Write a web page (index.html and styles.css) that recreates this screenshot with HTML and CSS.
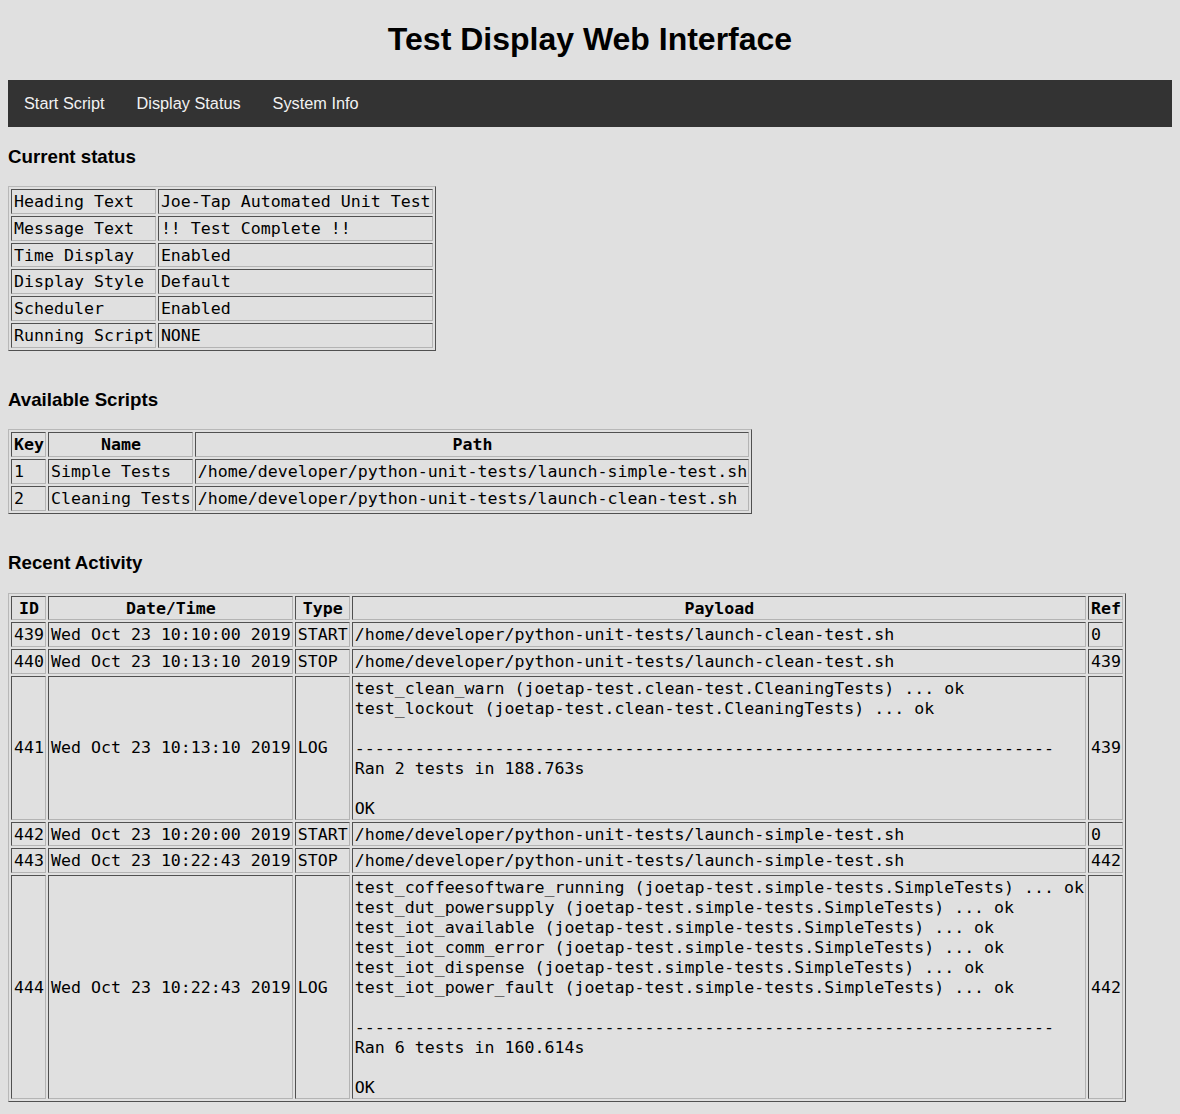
FILE: index.html
```html
<!DOCTYPE html>
<html lang="en">
<head>
<meta charset="utf-8">
<title>Test Display Web Interface</title>
<link rel="stylesheet" href="styles.css">
</head>
<body>
<h1 class="title">Test Display Web Interface</h1>
<nav class="topnav">
  <a href="#">Start Script</a>
  <a href="#">Display Status</a>
  <a href="#">System Info</a>
</nav>

<section class="section">
  <h3 class="heading">Current status</h3>
  <table class="grid">
    <tr><td>Heading Text</td><td>Joe-Tap Automated Unit Test</td></tr>
    <tr><td>Message Text</td><td>!! Test Complete !!</td></tr>
    <tr><td>Time Display</td><td>Enabled</td></tr>
    <tr><td>Display Style</td><td>Default</td></tr>
    <tr><td>Scheduler</td><td>Enabled</td></tr>
    <tr><td>Running Script</td><td>NONE</td></tr>
  </table>
</section>

<section class="section">
  <h3 class="heading">Available Scripts</h3>
  <table class="grid">
    <tr><th>Key</th><th>Name</th><th>Path</th></tr>
    <tr><td>1</td><td>Simple Tests</td><td>/home/developer/python-unit-tests/launch-simple-test.sh</td></tr>
    <tr><td>2</td><td>Cleaning Tests</td><td>/home/developer/python-unit-tests/launch-clean-test.sh</td></tr>
  </table>
</section>

<section class="section last">
  <h3 class="heading">Recent Activity</h3>
  <table class="grid">
    <tr><th>ID</th><th>Date/Time</th><th>Type</th><th>Payload</th><th>Ref</th></tr>
    <tr><td>439</td><td>Wed Oct 23 10:10:00 2019</td><td>START</td><td>/home/developer/python-unit-tests/launch-clean-test.sh</td><td>0</td></tr>
    <tr><td>440</td><td>Wed Oct 23 10:13:10 2019</td><td>STOP</td><td>/home/developer/python-unit-tests/launch-clean-test.sh</td><td>439</td></tr>
    <tr><td>441</td><td>Wed Oct 23 10:13:10 2019</td><td>LOG</td><td><pre class="log">test_clean_warn (joetap-test.clean-test.CleaningTests) ... ok
test_lockout (joetap-test.clean-test.CleaningTests) ... ok

----------------------------------------------------------------------
Ran 2 tests in 188.763s

OK</pre></td><td>439</td></tr>
    <tr><td>442</td><td>Wed Oct 23 10:20:00 2019</td><td>START</td><td>/home/developer/python-unit-tests/launch-simple-test.sh</td><td>0</td></tr>
    <tr><td>443</td><td>Wed Oct 23 10:22:43 2019</td><td>STOP</td><td>/home/developer/python-unit-tests/launch-simple-test.sh</td><td>442</td></tr>
    <tr><td>444</td><td>Wed Oct 23 10:22:43 2019</td><td>LOG</td><td><pre class="log">test_coffeesoftware_running (joetap-test.simple-tests.SimpleTests) ... ok
test_dut_powersupply (joetap-test.simple-tests.SimpleTests) ... ok
test_iot_available (joetap-test.simple-tests.SimpleTests) ... ok
test_iot_comm_error (joetap-test.simple-tests.SimpleTests) ... ok
test_iot_dispense (joetap-test.simple-tests.SimpleTests) ... ok
test_iot_power_fault (joetap-test.simple-tests.SimpleTests) ... ok

----------------------------------------------------------------------
Ran 6 tests in 160.614s

OK</pre></td><td>442</td></tr>
  </table>
</section>
</body>
</html>
```
FILE: styles.css
```css
html {
  background: #e0e0e0;
}

body {
  margin: 0 8px 8px;
  background: #e0e0e0;
  color: #000;
  font-family: "Liberation Sans", Arial, sans-serif;
  font-size: 16px;
}

.title {
  font-size: 32px;
  font-weight: bold;
  text-align: center;
  margin: 21.44px 0;
}

.topnav {
  display: flex;
  background: #333333;
}

.topnav a {
  display: block;
  color: #f2f2f2;
  text-decoration: none;
  padding: 14px 16px;
  font-size: 16.3px;
  line-height: 19px;
}

.section {
  padding-bottom: 19.5px;
}

.section.last {
  padding-bottom: 0;
}

.heading {
  font-size: 18.72px;
  font-weight: bold;
  margin: 18.72px 0;
}

.grid {
  border-collapse: separate;
  border-spacing: 2px;
  border: 1px solid;
  border-color: #b8b8b8 #505050 #505050 #b8b8b8;
  font-family: "DejaVu Sans Mono", "Liberation Mono", monospace;
  font-size: 16.6px;
}

.grid td,
.grid th {
  border: 1px solid;
  border-color: #505050 #b4b4b4 #b4b4b4 #505050;
  padding: 2px 1px 0 2px;
  line-height: 20.7px;
  vertical-align: middle;
  white-space: nowrap;
}

.grid td {
  text-align: left;
  font-weight: normal;
}

.grid th {
  text-align: center;
  font-weight: bold;
}

.log {
  margin: 0;
  font-family: inherit;
  font-size: inherit;
  line-height: 20px;
}
```
